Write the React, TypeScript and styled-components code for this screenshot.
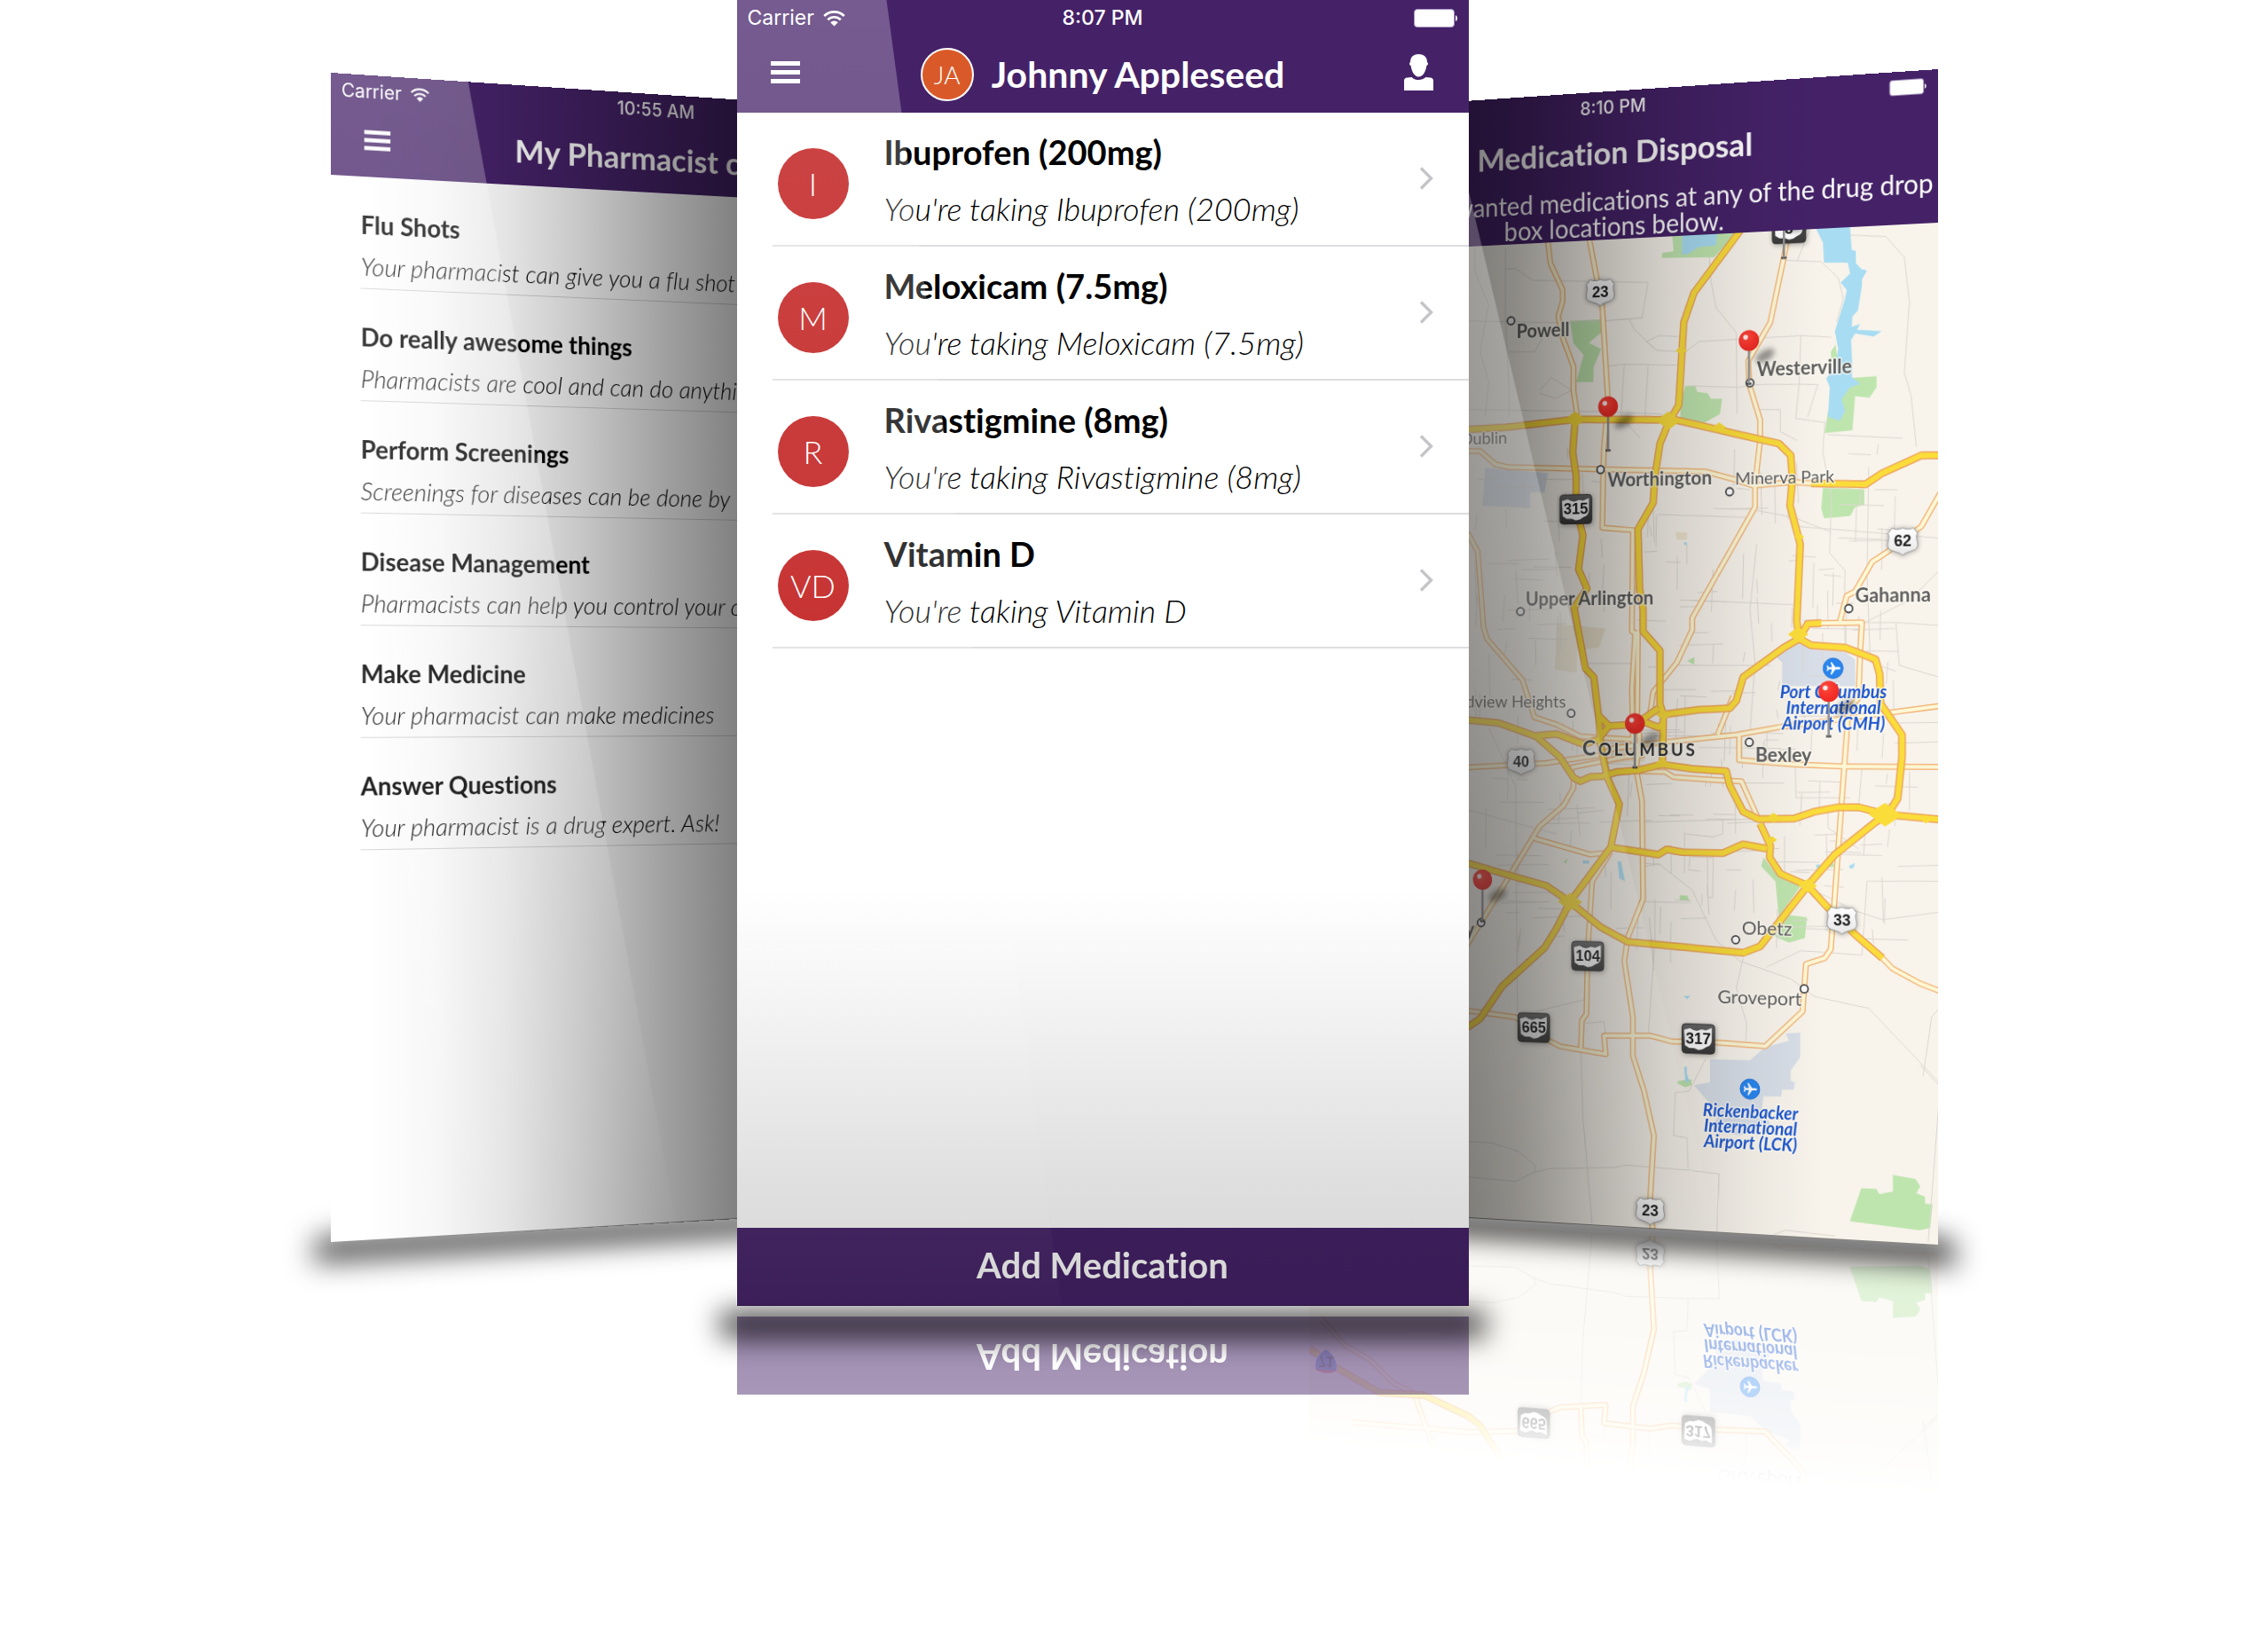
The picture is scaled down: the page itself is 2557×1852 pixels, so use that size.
import React from "react";
import styled, { createGlobalStyle, css } from "styled-components";

/* ---------- theme ---------- */

const PURPLE = "#452268";
const BRAND_FONT = '"Lato", "Open Sans", sans-serif';
const SYSTEM_FONT = '"Inter", "Liberation Sans", sans-serif';

const SIDE_WIDTH = 764;
const TILT_DEG = 6;
const TILT_DISTANCE = 1106;
const RIGHT_HORIZON = 710;
const RIGHT_HEADER = 173;
const RIGHT_HEIGHT = 1326;

const GlobalStyle = createGlobalStyle`
  *, *::before, *::after { box-sizing: border-box; }
  body {
    margin: 0;
    background: #fff;
    font-family: ${BRAND_FONT};
    font-variant-ligatures: none;
    overflow-x: hidden;
  }
  button { font: inherit; color: inherit; border: 0; padding: 0; background: none; cursor: pointer; }
  ul, h1, h2, h3, p { margin: 0; padding: 0; list-style: none; font-weight: inherit; font-size: inherit; }
`;

/* ---------- stage and devices ---------- */

const Stage = styled.main`
  display: flex;
  justify-content: center;
  align-items: flex-start;
  min-height: 100vh;
  overflow: hidden;
`;

const Device = styled.section`
  position: relative;
  flex: none;
  display: flex;
  flex-direction: column;
  background: #fff;
`;

const CenterDevice = styled(Device)`
  width: 825px;
  height: 1472px;
  z-index: 2;
`;

const LeftDevice = styled(Device)`
  width: ${SIDE_WIDTH}px;
  height: 1319px;
  margin: 82px -306px 0 0;
  transform-origin: 0 698px;
  transform: perspective(${TILT_DISTANCE}px) rotateY(${TILT_DEG}deg);
`;

const RightDevice = styled(Device)`
  width: ${SIDE_WIDTH}px;
  height: ${RIGHT_HEIGHT}px;
  margin: 78px 0 0 -235px;
  transform-origin: 100% ${RIGHT_HORIZON}px;
  transform: perspective(${TILT_DISTANCE}px) rotateY(-${TILT_DEG}deg);
`;

const overlay = css`
  position: absolute;
  inset: 0;
  pointer-events: none;
`;

const Shade = styled.div<{ $gradient: string }>`
  ${overlay}
  background: linear-gradient(${(p) => p.$gradient});
`;

const Glare = styled.div<{ $top: number; $bottom: number }>`
  ${overlay}
  clip-path: polygon(0 0, ${(p) => p.$top}px 0, ${(p) => p.$bottom}px 100%, 0 100%);
  background: linear-gradient(
    to bottom,
    rgba(255, 255, 255, 0.26) 0%,
    rgba(255, 255, 255, 0.2) 42%,
    rgba(255, 255, 255, 0.1) 70%,
    rgba(255, 255, 255, 0.01) 100%
  );
`;

/* Soft contact shadow; the clip keeps it off the device face. */
const Shadow = styled.div<{ $drop: number; $alpha: number }>`
  position: absolute;
  left: -80px;
  right: -80px;
  top: calc(100% - 60px);
  height: 160px;
  pointer-events: none;
  clip-path: polygon(
    0 0, 80px 0, 80px 59px, calc(100% - 80px) 59px,
    calc(100% - 80px) 0, 100% 0, 100% 100%, 0 100%
  );
  &::before {
    content: "";
    position: absolute;
    left: 62px;
    right: 62px;
    top: ${(p) => 60 + p.$drop}px;
    height: 26px;
    background: rgba(0, 0, 0, ${(p) => p.$alpha});
    filter: blur(16px);
  }
`;

/* ---------- header parts ---------- */

const StatusBar = styled.div<{ $size: number }>`
  display: grid;
  grid-template-columns: 1fr auto 1fr;
  align-items: center;
  height: ${(p) => p.$size * 2 - 6}px;
  padding: 0 12px;
  font: 400 ${(p) => p.$size}px ${SYSTEM_FONT};
  color: #fff;
`;

const Carrier = styled.span`
  display: flex;
  align-items: center;
  gap: 10px;
`;

const Clock = styled.time`
  grid-column: 2;
  font-weight: 500;
`;

const BatterySlot = styled.span`
  display: flex;
  justify-content: flex-end;
`;

const Header = styled.header<{ $height: number }>`
  flex: none;
  height: ${(p) => p.$height}px;
  background: ${PURPLE};
  color: #fff;
`;

const NavBar = styled.div<{ $height: number }>`
  display: grid;
  grid-template-columns: 80px 1fr 80px;
  align-items: center;
  height: ${(p) => p.$height}px;
`;

const IconButton = styled.button<{ $side: "left" | "right" }>`
  display: flex;
  justify-content: ${(p) => (p.$side === "left" ? "flex-start" : "flex-end")};
  padding: ${(p) => (p.$side === "left" ? "0 0 4px 38px" : "0 40px 4px 0")};
  width: 80px;
  svg { flex: none; }
`;

const NavTitle = styled.h1<{ $size: number }>`
  grid-column: 2;
  display: flex;
  justify-content: center;
  align-items: center;
  gap: 20px;
  font-size: ${(p) => p.$size}px;
  line-height: 44px;
  font-weight: 700;
  white-space: nowrap;
`;

const UserBadge = styled.span`
  display: grid;
  place-items: center;
  width: 60px;
  height: 60px;
  border: 2px solid #fff;
  border-radius: 50%;
  background: #d95a28;
  font-size: 28px;
  font-weight: 300;
`;

const HeaderNote = styled.p`
  padding-top: 6px;
  font-size: 30px;
  line-height: 30px;
  text-align: center;
  white-space: nowrap;
`;

/* ---------- medication list ---------- */

const MedicationList = styled.ul`
  flex: 1;
`;

const MedicationRow = styled.li`
  height: 151px;
  padding-left: 40px;
`;

const MedicationButton = styled.button`
  display: flex;
  align-items: center;
  width: 100%;
  height: 151px;
  padding: 2px 40px 0 6px;
  border-bottom: 2px solid #dddde1;
  text-align: left;
`;

const Initials = styled.span`
  display: grid;
  place-items: center;
  width: 80px;
  height: 80px;
  margin: 8px 40px 0 0;
  border-radius: 50%;
  background: #bb0606;
  color: #fff;
  font-size: 36px;
  font-weight: 300;
`;

const RowText = styled.span`
  flex: 1;
  display: flex;
  flex-direction: column;
  gap: 20px;
  color: #000;
`;

const RowName = styled.strong`
  font-size: 38px;
  line-height: 44px;
  font-weight: 700;
`;

const RowDetail = styled.em`
  font-size: 36px;
  line-height: 44px;
  font-weight: 300;
`;

const AddButton = styled.button`
  flex: none;
  height: 88px;
  padding-bottom: 4px;
  background: ${PURPLE};
  color: #fff;
  font-size: 40px;
  font-weight: 700;
  -webkit-box-reflect: below 12px linear-gradient(rgba(0, 0, 0, 0.47), rgba(0, 0, 0, 0.53));
`;

/* ---------- pharmacist list ---------- */

const ServiceList = styled.ul`
  padding-left: 34px;
`;

const ServiceRow = styled.li`
  display: flex;
  flex-direction: column;
  gap: 14px;
  height: 127px;
  padding-top: 37px;
  border-bottom: 1px solid #d2d2d4;
  color: #000;
  white-space: nowrap;
`;

const ServiceName = styled.h2`
  font-size: 28px;
  line-height: 34px;
  font-weight: 700;
`;

const ServiceDetail = styled.p`
  font-size: 28px;
  line-height: 32px;
  font-style: italic;
  font-weight: 300;
`;

/* ---------- map ---------- */

const MapPane = styled.div`
  flex: 1;
  min-height: 0;
  overflow: hidden;
  background: #f8f4ec;
  -webkit-box-reflect: below 8px
    linear-gradient(
      to bottom,
      transparent 76%,
      rgba(0, 0, 0, 0.25) 81%,
      rgba(0, 0, 0, 0.42) 90%,
      rgba(0, 0, 0, 0.5) 100%
    );
  svg { display: block; }
`;

/* ---------- icons ---------- */

const Wifi = ({ width }: { width: number }) => (
  <svg width={width} height={Math.round(width * 0.76)} viewBox="0 0 25 19" aria-hidden="true">
    <g fill="none" stroke="#fff" strokeWidth="2.6">
      <path d="M1.2 7 A16 16 0 0 1 23.8 7" />
      <path d="M5.2 11.2 A10.4 10.4 0 0 1 19.8 11.2" />
    </g>
    <path d="M12.5 18.6 L8.2 14.2 A6.2 6.2 0 0 1 16.8 14.2 Z" fill="#fff" />
  </svg>
);

const Battery = ({ width }: { width: number }) => (
  <svg width={width} height={Math.round(width * 0.42)} viewBox="0 0 50 21" aria-hidden="true">
    <rect x="0.5" y="0.5" width="45" height="20" rx="3.5" fill="#fff" stroke="#a893c0" />
    <path d="M47 7 A4 4 0 0 1 47 14 Z" fill="#fff" />
  </svg>
);

const MenuIcon = ({ width }: { width: number }) => (
  <svg width={width} height={Math.round(width * 0.76)} viewBox="0 0 33 25" aria-hidden="true">
    <path d="M0 0h33v5H0zM0 10h33v5H0zM0 20h33v5H0z" fill="#fff" />
  </svg>
);

const PersonIcon = () => (
  <svg width="33" height="41" viewBox="0 0 33 41" aria-hidden="true">
    <path d="M16.5 0 C22.5 0 26 3.6 26 9 C27.4 9.6 27.4 12 25.4 13 C24.4 20 21 25.6 16.5 25.6 S8.6 20 7.6 13 C5.6 12 5.6 9.6 7 9 C7 3.6 10.5 0 16.5 0 Z" fill="#fff" />
    <path d="M0 41 V30 C0 27.6 1.4 26.6 3.6 26.4 L8.6 26 C10.6 28 13.6 29 16.5 29 S22.4 28 24.4 26 L29.4 26.4 C31.6 26.6 33 27.6 33 30 V41 Z" fill="#fff" />
  </svg>
);

const Chevron = () => (
  <svg width="16" height="30" viewBox="0 0 16 30" aria-hidden="true">
    <path d="M2 1.5 L13.5 13 L2 24.5" fill="none" stroke="#c4c4c9" strokeWidth="3.4" />
  </svg>
);

/* ---------- map geometry ---------- */

type Pt = [number, number];

const TILT = (TILT_DEG * Math.PI) / 180;
const FALLOFF = Math.sin(TILT) / TILT_DISTANCE;

/* Survey coordinates are seen from the tilted side; bring them onto the flat pane. */
const place = ([sx, sy]: Pt): Pt => {
  const fromEdge = 545 - sx / 2.613;
  const flat = fromEdge / (Math.cos(TILT) - FALLOFF * fromEdge);
  const y = RIGHT_HORIZON + (sy / 3 - 728) * (1 + FALLOFF * flat) - RIGHT_HEADER;
  return [Math.round((SIDE_WIDTH - flat) * 10) / 10, Math.round(y * 10) / 10];
};

const parse = (s: string): Pt[] => s.trim().split(" ").map((p) => p.split(",").map(Number) as Pt);
const points = (s: string) => parse(s).map((p) => place(p).join(",")).join(" ");

const MOTORWAYS = [
  "-200,1300 42,1272 150,1265 355,1238 600,1240 640,1237 820,1285 955,1320 990,1360 995,1440 988,1530 1018,1660 1008,1920 1015,1980 1050,2002 1150,2010 1240,2050 1252,2100 1255,2200 1318,2305 1318,2380 1305,2520 1275,2575",
  "1275,2575 1240,2600 1120,2710 1040,2815 900,3020 850,3042 510,3005 430,2955 340,2870 270,2815 160,2780 42,2740 -200,2660",
  "1015,1980 970,2010 850,2110 830,2190 810,2215 720,2220 610,2237",
  "850,585 835,610 705,810 675,910 660,1190 630,1250 605,1320 590,1430 585,1520 540,1610 545,1810 555,1880 555,1955 605,2020 605,2200 615,2237 612,2408",
  "355,1238 348,1350 358,1430 358,1540 378,1630 365,1745 390,1810 352,1875 385,2080 410,2110 425,2250 430,2340 450,2450 485,2540 460,2685 340,2870 300,2960 265,3025 140,3155 75,3265 42,3291 -91,3345 -222,3336 -340,3399 -426,3456",
  "425,2240 455,2275 530,2270 560,2262 600,2280 612,2270",
  "530,2272 600,2215",
  "430,2310 455,2275",
  "-200,2240 42,2255 130,2265 240,2310 310,2380 350,2450 370,2462 400,2447 435,2445 480,2430 540,2425 610,2405 700,2420 800,2428 810,2475 850,2565 895,2590 1000,2588 1060,2565 1130,2550 1190,2550 1275,2575 1440,2592",
  "240,2308 300,2302 380,2337 430,2318",
  "460,2685 600,2710 625,2692 670,2702 790,2705 850,2675 920,2690",
  "900,2605 930,2680 928,2720 960,2775 1040,2815 1100,2890 1180,2980 1260,3060",
  "1050,1455 1210,1458 1260,1420 1375,1360 1440,1360",
  "1015,1980 1040,1930 1080,1927",
];

const HIGHWAYS = [
  "270,600 275,640 282,710 318,800 318,840 305,890 318,960 350,1060 350,1140 362,1235",
  "390,590 398,636 420,770 435,860 452,1180 440,1330 438,1410 435,1605 525,1612 522,1955 532,1960 522,2150 525,2320",
  "540,1955 538,2240 545,2320 535,2420 552,2530 555,2860 510,2990 500,3070 525,3260 525,3390 558,3510 587,3660 576,3870 584,3990",
  "985,590 970,690 930,910 865,1040 868,1120 900,1240 900,1310 885,1460 885,1535 700,1910 700,1950 655,2060 585,2160 575,2240",
  "-100,1345 42,1345 75,1345 120,1390 160,1400 440,1407 740,1415 820,1440 880,1462 1000,1450 1050,1455",
  "20,1600 42,1630 68,1685 85,1940 95,1980 200,2120 235,2245 300,2270 370,2310 430,2315 520,2320",
  "-100,2420 42,2415 270,2400 420,2375 470,2350 620,2330 830,2305 950,2280 1280,2230 1440,2206",
  "838,2305 838,2390 1000,2405 1145,2412 1440,2414",
  "1440,1470 1427,1495 1375,1600 1270,1690 1230,1720 1180,1820 1155,1835 1135,1920",
  "1080,1927 1200,1925 1195,2020 1190,2180 1160,2220 1148,2410 1135,2610 1118,2880 1108,3030 1090,3060 1035,3080 1025,3240 915,3358 770,3345 640,3342 575,3322 440,3322 445,3385 310,3358 280,3340 180,3260 42,3238 -300,3225",
  "350,2460 350,2485 320,2545 250,2615 160,2785 42,3005 -40,3150",
  "235,2655 400,2710 440,2705",
  "460,2700 405,2800 392,3030 388,3250 375,3270 372,3365",
  "545,2428 620,2430 645,2448 800,2460 845,2462 895,2590",
  "345,2430 345,2415 500,2380 560,2372",
  "820,2175 775,2305",
  "1260,3060 1290,3095 1370,3145 1440,3176",
  "-397,3567 -324,3483 -251,3444 -178,3372 -120,3348 -60,3165",
];

const STREETS = [
  "60,660 60,740 100,850 75,1010 100,1110 90,1230",
  "150,660 150,905 160,1120 160,1230",
  "150,730 180,728 230,768 570,775 552,895 440,905",
  "42,905 300,912 440,905 550,895",
  "160,1010 235,1010 260,960",
  "515,900 530,935 595,1005 680,1010 720,975 1020,955 1110,960",
  "595,1005 565,975 600,955 660,958",
  "750,690 755,770 770,860 830,945 832,1220",
  "970,700 1080,705 1130,760 1145,830 1125,910",
  "1165,615 1270,620 1325,690 1340,840 1325,1080 1345,1160 1360,1330",
  "1045,600 1010,700",
  "250,1140 285,1097 345,1140 298,1167 250,1150",
  "440,1060 500,1052 655,1055",
  "500,1052 490,1230 545,1300",
  "570,1058 560,1240",
  "700,1125 830,1130 900,1120 1070,1120 1040,1230",
  "1020,955 1015,1120 1005,1235 1100,1250",
  "1100,1290 1320,1302",
  "890,1205 960,1205 960,1280 1010,1310",
  "42,1205 440,1212 610,1220",
  "1090,1250 1085,1350 1110,1500 1105,1690 1150,1750 1148,1860",
  "1220,1400 1215,1760 1225,2060 1300,2090",
  "1010,1600 1220,1620 1427,1640",
  "860,1540 1000,1570 1110,1620",
  "600,1560 870,1570",
  "1427,1750 1340,1850 1200,1930",
  "1200,1925 1300,1925 1427,1935",
  "1300,1925 1310,2070 1427,2110",
  "700,1850 1000,1865",
  "890,1660 870,1880 885,2060 870,2300",
  "660,2070 930,2070",
  "560,2600 880,2590",
  "560,2750 600,2740 700,2830 770,3000 840,3070 990,3130 1060,3190 1220,3230 1427,3480",
  "920,3090 1020,3035 1200,3050 1215,2800 1427,2800",
  "1040,2820 1180,2900 1260,2930 1427,2905",
  "850,3060 830,3160 860,3280 858,3340",
  "1427,3230 1405,3260 1380,3460",
  "1190,2690 1100,2620 1100,2570",
  "240,3240 385,3200",
  "385,3280 440,3275 445,3320",
  "372,3365 378,3600 405,3960",
  "100,2280 180,2480 185,3240",
  "42,2560 300,2640",
  "360,2570 440,2560",
  "360,2540 370,2650",
  "42,3680 110,3685 190,3715 240,3765 232,3785 180,3815 42,3800",
  "232,3785 280,3772 470,3768 505,3760 690,3777 780,3790 772,3990",
  "740,3400 690,3510 650,3515 645,3660 685,3668 688,3775",
  "590,2860 590,3000 570,3330",
  "1427,3540 1410,3800 1395,4020",
  "940,3995 975,3980 1120,4000",
  "1370,3420 1427,3490",
  "680,2640 760,2650 790,2640 790,2590 740,2590",
  "745,2720 745,2855 760,2855 762,2720 700,2718",
  "1340,2430 1340,2560",
  "1200,2420 1190,2550",
];

const WATER = [
  "1065,595 1065,560 1165,560 1165,590 1170,665 1182,668 1182,710 1198,730 1215,735 1200,765 1200,785 1188,870 1172,890 1170,925 1195,915 1185,935 1258,940 1235,958 1180,948 1168,970 1172,1070 1170,1095 1195,1118 1165,1130 1140,1170 1150,1210 1135,1243 1100,1230 1105,1130 1095,1100 1120,1060 1130,1000 1120,940 1150,830 1155,800 1137,775 1165,745 1158,708 1088,708 1085,640",
  "670,600 775,590 770,650 720,655 685,680 670,680",
  "480,2733 490,2733 502,2800 485,2790",
  "378,2730 396,2730 396,2740 378,2740",
  "1065,2744 1090,2744 1090,2752 1065,2755",
  "1162,2748 1180,2738 1175,2755 1165,2758",
  "675,3188 694,3188 685,3199",
  "676,3430 684,3425 684,3450 692,3478 680,3480",
  "676,1654 684,1654 684,1663 676,1663",
];

const PARKS = [
  "640,600 840,590 820,620 765,690 610,692 612,675 645,670",
  "340,905 432,900 432,945 395,980 432,1000 410,1060 408,1112 358,1112 380,1020 350,980",
  "680,1125 708,1125 715,1145 745,1150 755,1168 788,1168 782,1220 735,1250 665,1235 665,1180",
  "1150,1100 1243,1092 1243,1130 1222,1165 1180,1160 1172,1275 1090,1285 1100,1210",
  "1122,985 1108,1010 1112,1060 1130,1060",
  "1085,1470 1207,1475 1207,1528 1180,1535 1165,1565 1088,1573 1080,1540",
  "910,2720 950,2780 1020,2815 955,2920 945,2800 903,2750",
  "985,2915 1038,2922 1032,2992 985,3008 940,2985",
  "663,2848 685,2848 692,2865 663,2865",
  "1164,3950 1198,3838 1243,3840 1250,3857 1291,3850 1291,3793 1358,3807 1372,3832 1360,3855 1386,3867 1386,3890 1408,3892 1401,3973 1369,3980",
  "657,3475 698,3470 698,3490 680,3497 657,3485",
  "685,2055 706,2042 706,2068",
  "1085,2745 1117,2738 1117,2752 1090,2754",
  "320,2735 334,2723 328,2740",
];

const FIELDS = [
  "945,2040 1015,1990 1050,2015 1150,2025 1180,2050 1180,2140 965,2140 965,2060",
  "752,3402 870,3405 915,3360 985,3340 975,3315 1018,3312 1018,3395 990,3440 990,3475 1003,3480 998,3505 965,3505 962,3528 910,3528 905,3570 930,3620 840,3660 750,3640 780,3590 705,3490 752,3480",
  "90,1402 275,1420 265,1485 222,1485 222,1538 82,1530",
];

const PLAZAS = [
  "300,1930 445,1945 425,2010 360,2020 360,2095 295,2085",
  "650,1620 685,1620 685,1645 655,1645",
  "460,2330 560,2325 560,2395 460,2400",
];

const BLOBS: [number, number, number][] = [
  [355, 1238, 13], [630, 1242, 15], [1012, 1965, 12], [340, 2870, 15], [1268, 2575, 19],
  [615, 2237, 9], [1040, 2815, 11], [668, 1005, 7], [780, 1265, 8], [1015, 1635, 6],
  [940, 2585, 8], [1388, 2590, 7], [935, 2660, 6], [612, 2400, 8], [855, 3040, 6],
];

const TOWNS: [number, number, string, "start" | "end", number, number][] = [
  [182, 965, "Powell", "start", 22, 700],
  [890, 1092, "Westerville", "start", 22, 700],
  [155, 1320, "Dublin", "end", 20, 400],
  [450, 1467, "Worthington", "start", 22, 700],
  [826, 1460, "Minerva Park", "start", 20, 400],
  [209, 1868, "Upper Arlington", "start", 22, 700],
  [1180, 1856, "Gahanna", "start", 22, 700],
  [328, 2212, "Grandview Heights", "end", 20, 400],
  [886, 2396, "Bexley", "start", 22, 700],
  [846, 2980, "Obetz", "start", 22, 400],
  [775, 3212, "Groveport", "start", 22, 400],
  [58, 2985, "Grove City", "end", 22, 700],
];

const AIRPORT_LABELS: [number, number, string][] = [
  [1115, 2180, "Port Columbus"],
  [1115, 2234, "International"],
  [1115, 2288, "Airport (CMH)"],
  [871, 3601, "Rickenbacker"],
  [871, 3654, "International"],
  [871, 3708, "Airport (LCK)"],
];

const DOTS: Pt[] = [
  [166, 905], [870, 1115], [430, 1408], [810, 1483], [194, 1888], [1161, 1878],
  [343, 2232], [868, 2330], [828, 2998], [1030, 3164], [78, 2940],
];

const PINS: [number, number, number][] = [
  [970, 530, 692], [867, 972, 1118], [452, 1195, 1343], [531, 2267, 2415],
  [1102, 2158, 2310], [82, 2795, 2935],
];

const US_SHIELDS: [number, number, string][] = [
  [429, 808, "23"], [1320, 1650, "62"], [196, 2395, "40"], [1141, 2932, "33"], [576, 3915, "23"],
];

const STATE_SHIELDS: [number, number, string][] = [
  [985, 592, "3"], [357, 1542, "315"], [392, 3053, "104"], [233, 3295, "665"], [718, 3333, "317"],
];

const at = (x: number, y: number) => `translate(${place([x, y]).join(" ")})`;

const Halo = styled.text`
  paint-order: stroke;
  stroke: rgba(255, 252, 244, 0.75);
  stroke-width: 3px;
  stroke-linejoin: round;
  font-family: ${BRAND_FONT};
`;

const ShieldText = styled.text`
  font: 700 18px "Liberation Sans", Arial, sans-serif;
  text-anchor: middle;
  fill: #1c1c1c;
`;

const Roads = ({ lines, color, casing, width }: { lines: string[]; color: string; casing: string; width: number }) => (
  <g fill="none" strokeLinejoin="round">
    {lines.map((l, i) => (
      <polyline key={`c${i}`} points={points(l)} stroke={casing} strokeWidth={width + 3} />
    ))}
    {lines.map((l, i) => (
      <polyline key={`f${i}`} points={points(l)} stroke={color} strokeWidth={width} />
    ))}
  </g>
);

const Areas = ({ shapes, color }: { shapes: string[]; color: string }) => (
  <g fill={color}>
    {shapes.map((s, i) => (
      <polygon key={i} points={points(s)} />
    ))}
  </g>
);

/* Short residential streets scattered over the built-up area. */
const sideStreets = (() => {
  let seed = 17;
  const next = () => {
    seed = (seed * 16807) % 2147483647;
    return seed / 2147483647;
  };
  const out: string[] = [];
  for (let i = 0; i < 260; i++) {
    const x = Math.round(60 + next() * 1250);
    const y = Math.round(1320 + next() * 1680);
    const len = Math.round(30 + next() * 130);
    const drift = Math.round((next() - 0.5) * 12);
    out.push(i % 2 ? `${x},${y} ${x + len},${y + drift}` : `${x},${y} ${x + drift},${y + len}`);
  }
  return out;
})();

const CityMap = () => (
  <svg width={SIDE_WIDTH} height={RIGHT_HEIGHT - RIGHT_HEADER} role="img" aria-label="Map of drug drop box locations around Columbus">
    <defs>
      <radialGradient id="pinHead" cx="38%" cy="32%" r="75%">
        <stop offset="0" stopColor="#ff4a3d" />
        <stop offset="0.6" stopColor="#f5302a" />
        <stop offset="1" stopColor="#e62822" />
      </radialGradient>
      <linearGradient id="shieldFace" x1="0" y1="0" x2="0" y2="1">
        <stop offset="0" stopColor="#ffffff" />
        <stop offset="1" stopColor="#e6e6e6" />
      </linearGradient>
      <linearGradient id="stateFace" x1="0" y1="0" x2="0" y2="1">
        <stop offset="0" stopColor="#6a6a6a" />
        <stop offset="0.5" stopColor="#4a4a4a" />
        <stop offset="1" stopColor="#3a3a3a" />
      </linearGradient>
      <filter id="soft" x="-50%" y="-50%" width="200%" height="200%">
        <feGaussianBlur stdDeviation="3" />
      </filter>
    </defs>
    <Areas shapes={FIELDS} color="#d8dfe8" />
    <Areas shapes={PLAZAS} color="#eee5cf" />
    <Areas shapes={PARKS} color="#bfe5ae" />
    <Areas shapes={WATER} color="#a8dcf2" />
    <g fill="none" stroke="#dcd8d1" strokeWidth="1">
      {[...STREETS, ...sideStreets].map((l, i) => (
        <polyline key={i} points={points(l)} />
      ))}
    </g>
    <Roads lines={HIGHWAYS} color="#fdf8d6" casing="#f3b77c" width={4} />
    <Roads lines={MOTORWAYS} color="#fbdd3a" casing="#eda45f" width={6} />
    <g fill="#fbdd3a">
      {BLOBS.map(([x, y, r], i) => (
        <path key={i} transform={at(x, y)} d={`M${-r} 0 L${-r / 3} ${-r / 2} L0 ${-r * 0.7} L${r / 2} ${-r / 3} L${r} 0 L${r / 3} ${r / 2} L0 ${r * 0.7} L${-r / 2} ${r / 3} Z`} />
      ))}
    </g>

    {STATE_SHIELDS.map(([x, y, n]) => (
      <g key={n} transform={at(x, y)}>
        <rect x="-19" y="-16" width="40" height="35" rx="4" fill="#000" opacity="0.3" filter="url(#soft)" />
        <rect x="-19.5" y="-17" width="39" height="34" rx="4" fill="url(#stateFace)" stroke="#333" />
        <path d="M-17 -10 L-10 -12 L-6 -10 L-2 -9 L4 -11 L9 -10 L16 -13 L16 0 C16 5 14 8 10 9 L5 12 L0 13 L-5 11 L-11 11 L-16 8 Z" fill="#fff" />
        <ShieldText y="6">{n}</ShieldText>
      </g>
    ))}
    {US_SHIELDS.map(([x, y, n], i) => (
      <g key={i} transform={at(x, y)}>
        <path d="M-12 -14 C-9 -12 -4 -12 0 -15 C4 -12 9 -12 12 -14 L17 -8 C14 -3 18 2 17 7 C16 12 5 11 0 17 C-5 11 -16 12 -17 7 C-18 2 -14 -3 -17 -8 Z" fill="#000" opacity="0.4" filter="url(#soft)" />
        <path d="M-12 -15 C-9 -13 -4 -13 0 -15 C4 -13 9 -13 12 -15 L17 -9 C14 -4 18 1 17 6 C16 12 5 11 0 16 C-5 11 -16 12 -17 6 C-18 1 -14 -4 -17 -9 Z" fill="url(#shieldFace)" stroke="#9a9a9a" strokeWidth="1" />
        <ShieldText y="6">{n}</ShieldText>
      </g>
    ))}
    <g transform={at(-379, 3414)}>
      <path d="M-14 -8 C-9 -12 9 -12 14 -8 C16 2 10 12 0 17 C-10 12 -16 2 -14 -8 Z" fill="#3f6fe0" stroke="#fff" />
      <path d="M-13 -8 C-8 -13 8 -13 13 -8 Z" fill="#d8404a" />
      <ShieldText y="8">71</ShieldText>
    </g>

    {DOTS.map(([x, y], i) => (
      <circle key={i} transform={at(x, y)} r="4.5" fill="#fff" stroke="#444" strokeWidth="1.8" />
    ))}

    {TOWNS.map(([x, y, label, anchor, size, weight]) => (
      <Halo key={label} transform={at(x, y)} textAnchor={anchor} fontSize={size} fontWeight={weight} fill="#606060">
        {label}
      </Halo>
    ))}
    <Halo transform={at(376, 2374)} fontSize="25" fontWeight={700} fill="#333" letterSpacing="3">
      C<tspan fontSize="20">OLUMBUS</tspan>
    </Halo>
    {AIRPORT_LABELS.map(([x, y, label], i) => (
      <Halo key={i} transform={at(x, y)} textAnchor="middle" fontSize="20" fontWeight={700} fontStyle="italic" fill="#1d57cf">
        {label}
      </Halo>
    ))}

    {([[1115, 2080], [870, 3503]] as Pt[]).map(([x, y], i) => (
      <g key={i} transform={at(x, y)}>
        <circle r="11.5" fill="#2a86ee" stroke="#1f6fd6" />
        <path d="M8.5 0 C8.5 -1 7 -1.3 5.5 -1.3 L2.5 -1.3 L-1.5 -7 L-3 -7 L-1.2 -1.3 L-4.8 -1.1 L-6.3 -3.2 L-7.5 -3.2 L-6.6 0 L-7.5 3.2 L-6.3 3.2 L-4.8 1.1 L-1.2 1.3 L-3 7 L-1.5 7 L2.5 1.3 L5.5 1.3 C7 1.3 8.5 1 8.5 0 Z" fill="#fff" />
      </g>
    ))}

    {PINS.map(([x, top, foot], i) => {
      const [px, py] = place([x, top]);
      const [, fy] = place([x, foot]);
      return (
        <g key={i} transform={`translate(${px} ${py})`}>
          <ellipse cx="19" cy="18" rx="12" ry="6" fill="#000" opacity="0.4" filter="url(#soft)" transform="rotate(-28 19 18)" />
          <path d={`M-3 ${fy - py}h6`} stroke="#444" strokeWidth="2.5" />
          <path d={`M0 8V${fy - py}`} stroke="#8f8f93" strokeWidth="2.6" />
          <circle r="12" fill="url(#pinHead)" />
          <circle cx="-4" cy="-4" r="2.8" fill="#fff" opacity="0.9" />
        </g>
      );
    })}
  </svg>
);

/* ---------- content ---------- */

const SERVICES = [
  { name: "Flu Shots", detail: "Your pharmacist can give you a flu shot" },
  { name: "Do really awesome things", detail: "Pharmacists are cool and can do anything" },
  { name: "Perform Screenings", detail: "Screenings for diseases can be done by" },
  { name: "Disease Management", detail: "Pharmacists can help you control your ch" },
  { name: "Make Medicine", detail: "Your pharmacist can make medicines" },
  { name: "Answer Questions", detail: "Your pharmacist is a drug expert. Ask!" },
];

const MEDICATIONS = [
  { initials: "I", name: "Ibuprofen (200mg)" },
  { initials: "M", name: "Meloxicam (7.5mg)" },
  { initials: "R", name: "Rivastigmine (8mg)" },
  { initials: "VD", name: "Vitamin D" },
];

const LEFT_SHADE =
  "to right, transparent 40px, rgba(0,0,0,.03) 120px, rgba(0,0,0,.1) 200px, rgba(0,0,0,.22) 290px, rgba(0,0,0,.36) 385px, rgba(0,0,0,.49) 478px";
const RIGHT_SHADE =
  "to left, transparent 130px, rgba(0,0,0,.05) 215px, rgba(0,0,0,.14) 310px, rgba(0,0,0,.29) 410px, rgba(0,0,0,.43) 500px, rgba(0,0,0,.49) 560px";
const CENTER_SHADE = "to bottom, transparent 1000px, rgba(0,0,0,.04) 1110px, rgba(0,0,0,.13) 1340px, rgba(0,0,0,.17) 1472px";

const PharmacistScreen = () => (
  <LeftDevice aria-label="Pharmacist services">
    <Header $height={115}>
      <StatusBar $size={21}>
        <Carrier>Carrier <Wifi width={22} /></Carrier>
        <Clock>10:55 AM</Clock>
      </StatusBar>
      <NavBar $height={78}>
        <IconButton $side="left" aria-label="Menu"><MenuIcon width={30} /></IconButton>
        <NavTitle $size={37}>My Pharmacist can...</NavTitle>
      </NavBar>
    </Header>
    <ServiceList>
      {SERVICES.map((s) => (
        <ServiceRow key={s.name}>
          <ServiceName>{s.name}</ServiceName>
          <ServiceDetail>{s.detail}</ServiceDetail>
        </ServiceRow>
      ))}
    </ServiceList>
    <Shade $gradient={LEFT_SHADE} />
    <Glare $top={158} $bottom={406} />
    <Shadow $drop={-6} $alpha={0.75} />
  </LeftDevice>
);

const MedicationScreen = () => (
  <CenterDevice aria-label="Medications">
    <Header $height={127}>
      <StatusBar $size={23}>
        <Carrier>Carrier <Wifi width={25} /></Carrier>
        <Clock>8:07 PM</Clock>
        <BatterySlot><Battery width={50} /></BatterySlot>
      </StatusBar>
      <NavBar $height={87}>
        <IconButton $side="left" aria-label="Menu"><MenuIcon width={33} /></IconButton>
        <NavTitle $size={41}>
          <UserBadge>JA</UserBadge>
          Johnny Appleseed
        </NavTitle>
        <IconButton $side="right" aria-label="Profile"><PersonIcon /></IconButton>
      </NavBar>
    </Header>
    <MedicationList>
      {MEDICATIONS.map((m) => (
        <MedicationRow key={m.name}>
          <MedicationButton>
            <Initials>{m.initials}</Initials>
            <RowText>
              <RowName>{m.name}</RowName>
              <RowDetail>You're taking {m.name}</RowDetail>
            </RowText>
            <Chevron />
          </MedicationButton>
        </MedicationRow>
      ))}
    </MedicationList>
    <AddButton>Add Medication</AddButton>
    <Shade $gradient={CENTER_SHADE} />
    <Glare $top={169} $bottom={366} />
    <Shadow $drop={8} $alpha={0.85} />
  </CenterDevice>
);

const DisposalScreen = () => (
  <RightDevice aria-label="Medication disposal">
    <Header $height={RIGHT_HEADER}>
      <StatusBar $size={21}>
        <Carrier>Carrier <Wifi width={22} /></Carrier>
        <Clock>8:10 PM</Clock>
        <BatterySlot><Battery width={44} /></BatterySlot>
      </StatusBar>
      <NavBar $height={70}>
        <NavTitle $size={37}>Medication Disposal</NavTitle>
      </NavBar>
      <HeaderNote>
        Dispose of unwanted medications at any of the drug drop
        <br />
        box locations below.
      </HeaderNote>
    </Header>
    <MapPane>
      <CityMap />
    </MapPane>
    <Shade $gradient={RIGHT_SHADE} />
    <Glare $top={177} $bottom={508} />
    <Shadow $drop={-6} $alpha={0.85} />
  </RightDevice>
);

export default function App() {
  return (
    <>
      <GlobalStyle />
      <Stage>
        <PharmacistScreen />
        <MedicationScreen />
        <DisposalScreen />
      </Stage>
    </>
  );
}
